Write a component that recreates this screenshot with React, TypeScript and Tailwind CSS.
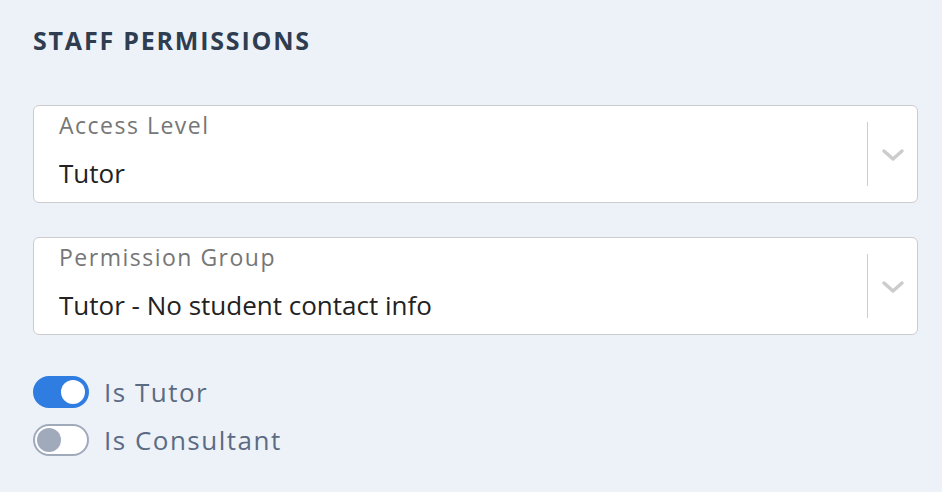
import { useState } from 'react';

function Chevron() {
  return (
    <svg width="24" height="14" viewBox="0 0 24 14" fill="none">
      <path d="M3 3l9 8 9-8" stroke="#cccccc" strokeWidth="3.5" strokeLinecap="round" strokeLinejoin="round" />
    </svg>
  );
}

function SelectField({ label, value }: { label: string; value: string }) {
  return (
    <div className="flex h-[98px] rounded-[6px] border-[1.5px] border-[#cccccc] bg-white">
      <div className="flex-1 pl-[25px] pt-[5px]">
        <div className="text-[23px] leading-[28px] tracking-[1.5px] text-[#767676]">{label}</div>
        <div className="mt-[18px] text-[26px] leading-[32px] text-[#222222]">{value}</div>
      </div>
      <div className="flex items-center">
        <div className="h-[64px] w-[1.5px] bg-[#cccccc]" />
        <div className="flex w-[49px] justify-center pt-[1px]">
          <Chevron />
        </div>
      </div>
    </div>
  );
}

function Toggle({ label, on, onClick }: { label: string; on: boolean; onClick: () => void }) {
  return (
    <button onClick={onClick} className="flex items-center gap-[15px] text-left">
      <span
        className={`flex h-[32px] w-[56px] items-center rounded-full border-2 px-[2px] ${
          on ? 'justify-end border-[#2f7de1] bg-[#2f7de1]' : 'justify-start border-[#a0aabb] bg-white'
        }`}
      >
        <span className={`h-[24px] w-[24px] rounded-full ${on ? 'bg-white' : 'bg-[#a0aabb]'}`} />
      </span>
      <span className="text-[26px] leading-[32px] tracking-[1.5px] text-[#5b6b83]">{label}</span>
    </button>
  );
}

export default function App() {
  const [isTutor, setIsTutor] = useState(true);
  const [isConsultant, setIsConsultant] = useState(false);

  return (
    <div
      className="h-[492px] w-full bg-[#edf2f9] pl-[33px] pr-[24px] pt-[24px]"
      style={{ fontFamily: '"Open Sans", "Noto Sans", sans-serif' }}
    >
      <h2 className="text-[25px] font-bold leading-[32px] tracking-[1.8px] text-[#2f3d50]">STAFF PERMISSIONS</h2>

      <div className="mt-[49px] flex flex-col gap-[34px]">
        <SelectField label="Access Level" value="Tutor" />
        <SelectField label="Permission Group" value="Tutor - No student contact info" />
      </div>

      <div className="mt-[41px] flex flex-col gap-[16px]">
        <Toggle label="Is Tutor" on={isTutor} onClick={() => setIsTutor(!isTutor)} />
        <Toggle label="Is Consultant" on={isConsultant} onClick={() => setIsConsultant(!isConsultant)} />
      </div>
    </div>
  );
}
